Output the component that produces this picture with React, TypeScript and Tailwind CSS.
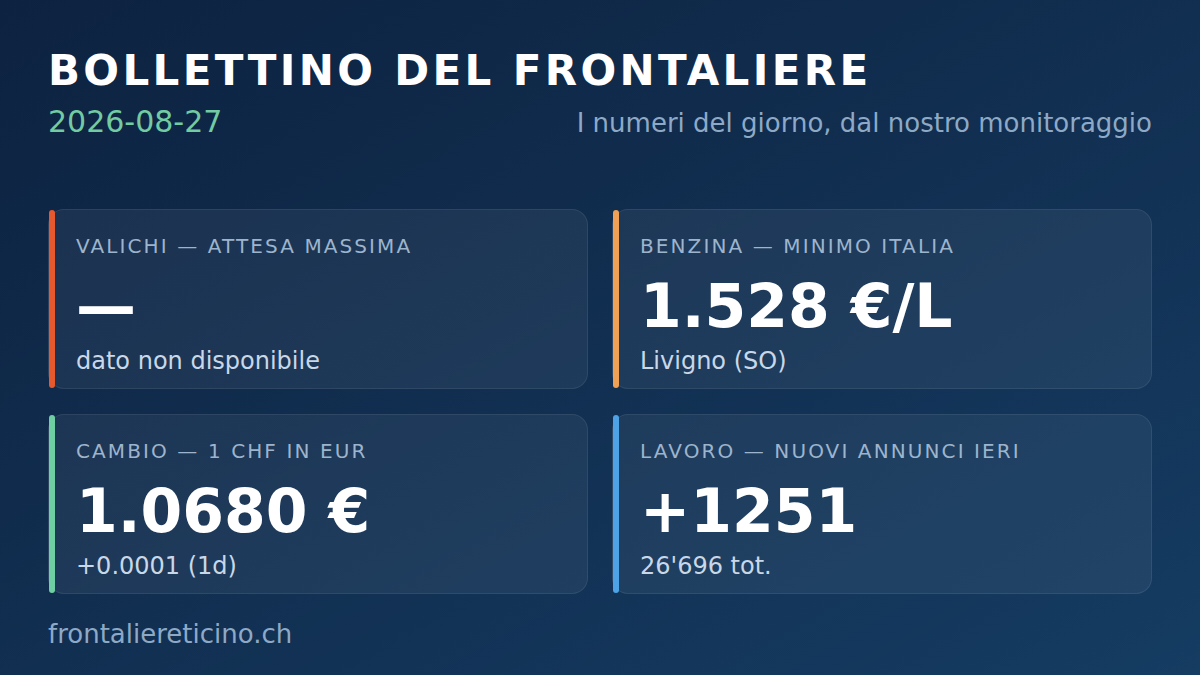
import React from "react";

type Card = { label: string; value: string; sub: string; accent: string };

const cards: Card[] = [
  { label: "VALICHI — ATTESA MASSIMA", value: "—", sub: "dato non disponibile", accent: "bg-[#e6592e]" },
  { label: "BENZINA — MINIMO ITALIA", value: "1.528 €/L", sub: "Livigno (SO)", accent: "bg-[#f0a155]" },
  { label: "CAMBIO — 1 CHF IN EUR", value: "1.0680 €", sub: "+0.0001 (1d)", accent: "bg-[#6fcfa2]" },
  { label: "LAVORO — NUOVI ANNUNCI IERI", value: "+1251", sub: "26'696 tot.", accent: "bg-[#4ea3e6]" },
];

export default function App() {
  return (
    <div
      className="w-[1200px] h-[675px] overflow-hidden bg-gradient-to-br from-[#0d2240] to-[#153c62] px-12 pt-[50px] flex flex-col"
      style={{ fontFamily: '"DejaVu Sans", sans-serif' }}
    >
      <h1 className="text-[42px] leading-none font-bold tracking-[0.08em] text-white">
        BOLLETTINO DEL FRONTALIERE
      </h1>
      <div className="mt-[15px] flex items-baseline justify-between">
        <span className="text-[30px] leading-none text-[#72cba2]">2026-08-27</span>
        <span className="text-[26px] leading-none text-[#8ea9c6]">
          I numeri del giorno, dal nostro monitoraggio
        </span>
      </div>
      <div className="mt-[72px] grid grid-cols-2 gap-x-6 gap-y-[25px]">
        {cards.map((c) => (
          <div
            key={c.label}
            className="relative rounded-2xl border border-white/[0.08] bg-white/[0.055] pl-[27px] pt-[26px] pb-[15px] flex flex-col"
          >
            <div className={`absolute left-0 top-0 bottom-0 w-[6px] rounded-full ${c.accent}`} />
            <div className="text-[20px] leading-none tracking-[0.105em] text-[#9db4cd]">{c.label}</div>
            <div className="mt-5 text-[60px] leading-none font-bold text-white">{c.value}</div>
            <div className="mt-[13px] text-[24px] leading-none text-[#c9d8e8]">{c.sub}</div>
          </div>
        ))}
      </div>
      <div className="mt-[27px] text-[26px] leading-none text-[#8ea9c6]">frontaliereticino.ch</div>
    </div>
  );
}
